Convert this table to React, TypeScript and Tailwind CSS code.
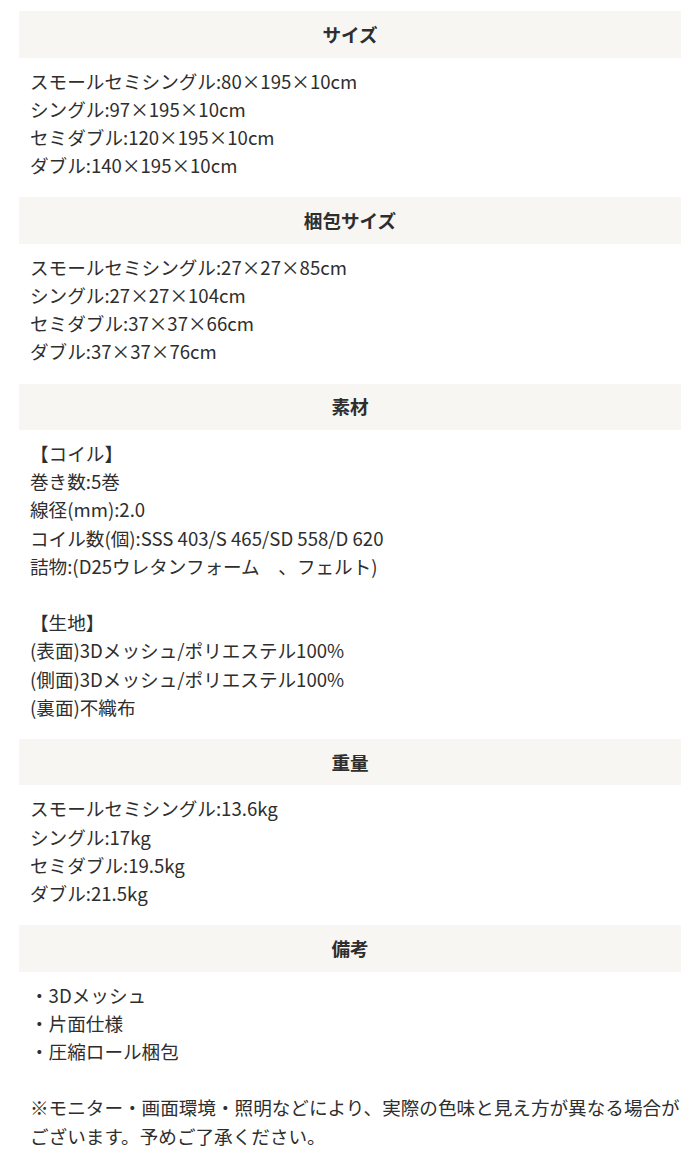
import React from "react";

type Section = { title: string; lines: string[] };

const sections: Section[] = [
  {
    title: "サイズ",
    lines: [
      "スモールセミシングル:80×195×10cm",
      "シングル:97×195×10cm",
      "セミダブル:120×195×10cm",
      "ダブル:140×195×10cm",
    ],
  },
  {
    title: "梱包サイズ",
    lines: [
      "スモールセミシングル:27×27×85cm",
      "シングル:27×27×104cm",
      "セミダブル:37×37×66cm",
      "ダブル:37×37×76cm",
    ],
  },
  {
    title: "素材",
    lines: [
      "【コイル】",
      "巻き数:5巻",
      "線径(mm):2.0",
      "コイル数(個):SSS 403/S 465/SD 558/D 620",
      "詰物:(D25ウレタンフォーム　、フェルト)",
      "",
      "【生地】",
      "(表面)3Dメッシュ/ポリエステル100%",
      "(側面)3Dメッシュ/ポリエステル100%",
      "(裏面)不織布",
    ],
  },
  {
    title: "重量",
    lines: [
      "スモールセミシングル:13.6kg",
      "シングル:17kg",
      "セミダブル:19.5kg",
      "ダブル:21.5kg",
    ],
  },
  {
    title: "備考",
    lines: [
      "・3Dメッシュ",
      "・片面仕様",
      "・圧縮ロール梱包",
      "",
      "※モニター・画面環境・照明などにより、実際の色味と見え方が異なる場合が",
      "ございます。予めご了承ください。",
    ],
  },
];

export default function App() {
  return (
    <div
      className="bg-white text-[#2e2e2e] pt-[11px] px-[19px] w-[700px]"
      style={{ fontFamily: '"Noto Sans CJK JP", "Noto Sans", sans-serif' }}
    >
      {sections.map((s) => (
        <section key={s.title}>
          <h2 className="bg-[#f7f6f2] h-[46.5px] flex items-center justify-center text-[18.6px] font-bold leading-none">
            {s.title}
          </h2>
          <div className="pl-[11px] pt-[9px] pb-[18px] text-[18.6px] leading-[28.2px] whitespace-nowrap">
            {s.lines.map((l, i) => (
              <div key={i} className="h-[28.2px]">
                {l}
              </div>
            ))}
          </div>
        </section>
      ))}
    </div>
  );
}
